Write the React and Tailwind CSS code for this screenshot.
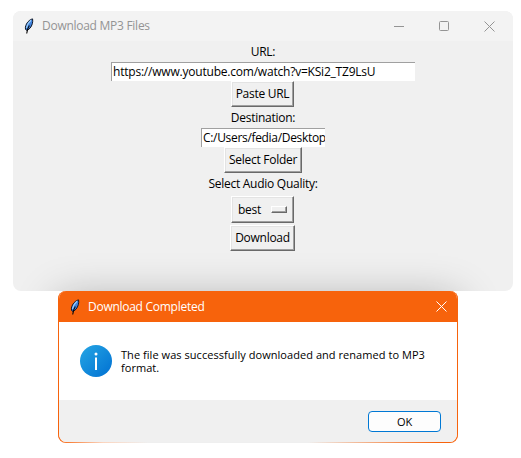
function Feather() {
  return (
    <svg className="h-4 w-4 shrink-0" viewBox="0 0 16 16" fill="none">
      <path d="M11.6 .9C8.4 1.5 5.2 5 4.4 9.1L4.5 11.4L6.2 12.6L9 10.2C11.2 7.5 12.1 4.2 11.6 .9Z" fill="#3f82dc" stroke="#101828" />
      <path d="M10 2.2C7.6 4.3 6 7 5.4 9.8" stroke="#9fd0fb" strokeWidth="1.2" />
      <path d="M8.3 7.5C7 9.6 6 12 5.7 15.5" stroke="#080808" strokeWidth="1.1" />
    </svg>
  );
}

function Close({ className }) {
  return (
    <svg className={className} viewBox="0 0 11 11" fill="none" stroke="currentColor">
      <path d="M.5.5 10.5 10.5M10.5.5.5 10.5" />
    </svg>
  );
}

const raised =
  "flex items-center border border-t-white border-l-white border-r-[#696969] border-b-[#696969] bg-[#f0f0f0] whitespace-nowrap shadow-[inset_-1px_-1px_0_#a0a0a0,inset_1px_1px_0_#e3e3e3]";
const entry =
  "flex items-center overflow-hidden border-t border-l border-t-[#a0a0a0] border-l-[#a0a0a0] bg-white pl-px whitespace-nowrap";

export default function App() {
  return (
    <main className="h-[458px] w-[521px] overflow-hidden bg-white pt-[11px] pl-[13px] font-['Open_Sans','Noto_Sans',sans-serif] text-[12px] leading-none tracking-[-0.27px] text-black">
      <section className="relative h-[280px] w-[500px] overflow-hidden rounded-lg bg-[#f0f0f0]">
        <header className="flex h-[30px] items-center bg-[#f3f3f3] pl-2 text-[#949494]">
          <Feather />
          <span className="ml-[5px] w-[120px] whitespace-nowrap">Download MP3 Files</span>
          <svg className="ml-[232px] h-[11px] w-[11px]" viewBox="0 0 11 11" stroke="currentColor">
            <path d="M0 5.5H10" />
          </svg>
          <svg className="ml-[34px] h-[11px] w-[11px]" viewBox="0 0 11 11" fill="none" stroke="currentColor">
            <rect x=".5" y=".5" width="9" height="9" rx="1" />
          </svg>
          <Close className="ml-[34px] h-[11px] w-[11px]" />
        </header>
        <div className="flex flex-col items-center">
          <label className="flex h-[21px] items-center">URL:</label>
          <div className={`${entry} h-[19px] w-[304px] tracking-[-0.21px]`}>https://www.youtube.com/watch?v=KSi2_TZ9LsU</div>
          <button className={`${raised} mr-px h-[26px] w-[63px] justify-center`}>Paste URL</button>
          <label className="flex h-[21px] items-center">Destination:</label>
          <div className={`${entry} h-[19px] w-[124px] tracking-[-0.32px]`}>C:/Users/fedia/Desktop</div>
          <button className={`${raised} h-[26px] w-[78px] justify-center`}>Select Folder</button>
          <label className="flex h-[21px] items-center">Select Audio Quality:</label>
          <button className={`${raised} mt-[2px] mr-px h-[27px] w-[63px] pl-1.5`}>
            <span className="w-[33px] text-left">best</span>
            <span className="h-[7px] w-[16px] border border-t-white border-l-white border-r-[#696969] border-b-[#696969] shadow-[inset_-1px_-1px_0_#a0a0a0]" />
          </button>
          <button className={`${raised} mt-[2px] mr-px h-[26px] w-[65px] justify-center`}>Download</button>
        </div>
        <div className="absolute top-[280px] left-[45px] h-[152px] w-[400px] shadow-[0_8px_40px_0_rgba(0,0,0,0.3)]" />
      </section>
      <section className="ml-[45px] h-[152px] w-[400px] rounded-lg bg-[linear-gradient(to_right,#f7630c,#fbd5bf_45px,#efefef_90px,#efefef_250px,#f7630c_380px)]">
        <div className="flex h-[151px] flex-col overflow-hidden rounded-lg border-x border-[#f7630c] bg-white">
          <header className="flex h-[31px] shrink-0 items-center bg-[#f7630c] pl-2 text-white">
            <Feather />
            <span className="ml-[5px] whitespace-nowrap">Download Completed</span>
            <Close className="mr-[10px] ml-auto h-[11px] w-[11px]" />
          </header>
          <div className="flex h-[78px] shrink-0 items-center pl-[21px]">
            <svg className="h-8 w-8 shrink-0" viewBox="0 0 32 32">
              <defs>
                <linearGradient id="info" x1="0" y1="0" x2="1" y2="1">
                  <stop stopColor="#26a6e4" />
                  <stop offset="1" stopColor="#0070d2" />
                </linearGradient>
              </defs>
              <circle cx="16" cy="16" r="16" fill="url(#info)" />
              <circle cx="16" cy="9" r="1.5" fill="white" />
              <path d="M16 12.5V25" stroke="white" strokeWidth="2" />
            </svg>
            <div className="ml-[9px] flex flex-col text-[11px] leading-[13px] tracking-[0.05px] whitespace-nowrap">
              <p>The file was successfully downloaded and renamed to MP3</p>
              <p>format.</p>
            </div>
          </div>
          <footer className="flex grow justify-end bg-[#f0f0f0] pt-[11px] pr-[16px]">
            <button className="flex h-[21px] w-[73px] items-center justify-center rounded border border-[#0078d4] bg-[#fdfdfd] text-[11px]">OK</button>
          </footer>
        </div>
      </section>
    </main>
  );
}
